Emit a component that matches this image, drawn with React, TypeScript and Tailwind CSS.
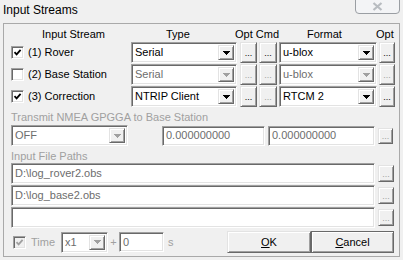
import React from 'react';

const sunken =
  'border border-t-[#a0a0a0] border-l-[#a0a0a0] border-b-white border-r-white shadow-[inset_1px_1px_0_#696969,inset_-1px_-1px_0_#e3e3e3]';
const raised =
  'border border-t-[#e3e3e3] border-l-[#e3e3e3] border-b-[#696969] border-r-[#696969] shadow-[inset_1px_1px_0_#ffffff,inset_-1px_-1px_0_#a0a0a0] bg-[#f0f0f0]';

function Arrow({ disabled }: { disabled?: boolean }) {
  return (
    <svg width="7" height="4" viewBox="0 0 7 4" shapeRendering="crispEdges">
      <polygon points="0,0 7,0 3.5,4" fill={disabled ? '#a0a0a0' : '#000000'} />
    </svg>
  );
}

function Combo({ text, className, disabled }: { text: string; className: string; disabled?: boolean }) {
  return (
    <div className={`${sunken} bg-white flex items-stretch p-[2px] ${className}`}>
      <span className={`flex-1 flex items-center pl-[1px] ${disabled ? 'text-[#6d6d6d]' : 'text-black'}`}>{text}</span>
      <span className={`${raised} w-[16px] flex items-center justify-center`}>
        <Arrow disabled={disabled} />
      </span>
    </div>
  );
}

function Field({ text, className }: { text?: string; className: string }) {
  return (
    <div className={`${sunken} bg-white flex items-center pl-[3px] text-[#6d6d6d] ${className}`}>{text}</div>
  );
}

function Dots({ className, disabled }: { className: string; disabled?: boolean }) {
  return (
    <button
      className={`${raised} flex items-center justify-center text-[9px] leading-none pt-[2px] ${
        disabled ? 'text-[#a0a0a0]' : 'text-black'
      } ${className}`}
    >
      ...
    </button>
  );
}

function Check({ disabled }: { disabled?: boolean }) {
  return (
    <span
      className={`${sunken} w-[13px] h-[13px] flex items-center justify-center ${disabled ? 'bg-[#f0f0f0]' : 'bg-white'}`}
    >
      <svg width="9" height="9" viewBox="0 0 9 9">
        <path d="M1.5 4.2 L3.6 6.4 L7.6 1.8" fill="none" stroke={disabled ? '#a0a0a0' : '#000000'} strokeWidth="1.8" />
      </svg>
    </span>
  );
}

function Empty() {
  return <span className={`${sunken} w-[13px] h-[13px] bg-white`} />;
}

export default function App() {
  return (
    <div className="w-[403px] h-[260px] bg-[#f0f0f0] relative overflow-hidden font-['Liberation_Sans',Arial,sans-serif] text-[11px] leading-[13px] text-black">
      {/* title bar */}
      <div className="h-[23px] pl-[3px] pt-[3px] text-[12px] leading-[14px]">Input Streams</div>
      <div className="absolute top-[-1px] right-[3px] w-[45px] h-[15px] border border-[#9a9ea3] rounded-b-[4px] bg-[#f3f4f6] flex items-center justify-center">
        <svg width="11" height="9" viewBox="0 0 11 9">
          <path d="M1.5 1 L9.5 8 M9.5 1 L1.5 8" stroke="#b8bcc1" strokeWidth="2.2" fill="none" />
        </svg>
      </div>

      {/* client area */}
      <div className="mx-[3px] h-[234px] border border-[#a9a9a9] flex flex-col">
        <div className="h-[18px] pt-[4px] flex">
          <span className="w-[127px] pl-[38px]">Input Stream</span>
          <span className="w-[104px] pl-[35px]">Type</span>
          <span className="w-[72px]">Opt Cmd</span>
          <span className="w-[69px]">Format</span>
          <span>Opt</span>
        </div>

        <div className="flex flex-col gap-[1px]">
          <div className="h-[21px] flex">
            <div className="w-[127px] pl-[7px] flex items-center gap-[4px]">
              <Check />
              <span>(1) Rover</span>
            </div>
            <Combo text="Serial" className="w-[106px]" />
            <Dots className="ml-[3px] w-[17px]" />
            <Dots className="ml-[2px] w-[18px]" />
            <Combo text="u-blox" className="ml-[2px] w-[98px]" />
            <Dots className="ml-[2px] w-[16px]" />
          </div>
          <div className="h-[21px] flex">
            <div className="w-[127px] pl-[7px] flex items-center gap-[4px]">
              <Empty />
              <span>(2) Base Station</span>
            </div>
            <Combo text="Serial" className="w-[106px]" disabled />
            <Dots className="ml-[3px] w-[17px]" disabled />
            <Dots className="ml-[2px] w-[18px]" disabled />
            <Combo text="u-blox" className="ml-[2px] w-[98px]" disabled />
            <Dots className="ml-[2px] w-[16px]" disabled />
          </div>
          <div className="h-[21px] flex">
            <div className="w-[127px] pl-[7px] flex items-center gap-[4px]">
              <Check />
              <span>(3) Correction</span>
            </div>
            <Combo text="NTRIP Client" className="w-[106px]" />
            <Dots className="ml-[3px] w-[17px]" />
            <Dots className="ml-[2px] w-[18px]" disabled />
            <Combo text="RTCM 2" className="ml-[2px] w-[98px]" />
            <Dots className="ml-[2px] w-[16px]" />
          </div>
        </div>

        <div className="mt-[4px] pl-[7px] text-[#a0a0a0]">Transmit NMEA GPGGA to Base Station</div>
        <div className="mt-[1px] h-[21px] pl-[7px] flex items-center">
          <Combo text="OFF" className="w-[117px] h-[21px]" disabled />
          <Field text="0.000000000" className="ml-[34px] w-[103px] h-[20px]" />
          <Field text="0.000000000" className="ml-[3px] w-[107px] h-[20px]" />
          <Dots className="ml-[3px] w-[15px] h-[16px]" disabled />
        </div>

        <div className="mt-[4px] pl-[7px] text-[#a0a0a0]">Input File Paths</div>
        <div className="flex flex-col gap-[1px]">
          {['D:\\log_rover2.obs', 'D:\\log_base2.obs', ''].map((p, i) => (
            <div key={i} className="h-[21px] pl-[7px] flex items-center">
              <Field text={p} className="w-[364px] h-[21px]" />
              <Dots className="ml-[3px] w-[16px] h-[17px]" disabled />
            </div>
          ))}
        </div>

        <div className="mt-[3px] h-[22px] flex items-center">
          <div className="pl-[9px] flex items-center">
            <Check disabled />
          </div>
          <span className="ml-[5px] w-[30px] text-[#a0a0a0]">Time</span>
          <Combo text="x1" className="w-[47px] h-[21px]" disabled />
          <span className="w-[11px] text-center text-[#a0a0a0]">+</span>
          <Field text="0" className="w-[45px] h-[20px]" />
          <span className="ml-[4px] text-[#a0a0a0]">s</span>
          <div className="ml-auto mr-[5px] flex">
            <button className={`${raised} w-[84px] h-[22px] flex items-center justify-center`}>
              <span>
                <span className="underline">O</span>K
              </span>
            </button>
            <button className={`${raised} w-[83px] h-[22px] flex items-center justify-center outline outline-1 outline-[#696969] -outline-offset-1`}>
              <span>
                <span className="underline">C</span>ancel
              </span>
            </button>
          </div>
        </div>
      </div>
    </div>
  );
}
